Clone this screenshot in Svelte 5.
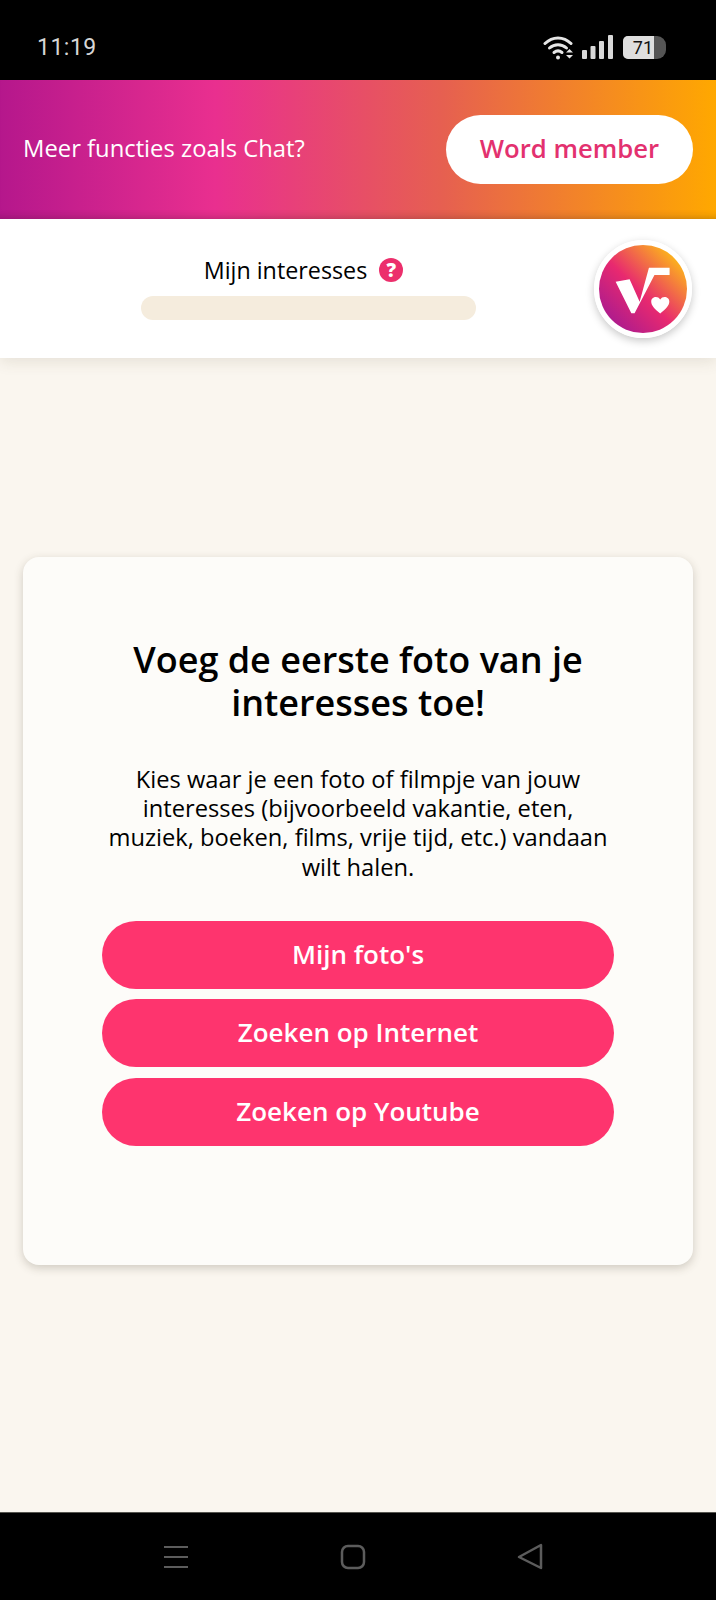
<script>
	const actions = ["Mijn foto's", 'Zoeken op Internet', 'Zoeken op Youtube'];
</script>

<div class="screen">
	<header class="status">
		<span class="time">11:19</span>
		<div class="status-icons">
			<svg class="wifi" width="32" height="26" viewBox="0 0 32 26" fill="none" stroke="#e6e6e6" stroke-linecap="round">
				<path d="M2 9.5C9.5 2 20.5 2 28 9.5" stroke-width="3" />
				<path d="M6.5 14C11.5 9.5 18.500 9.500 23.500 14" stroke-width="3" />
				<path d="M11 18.500C13.500 16.500 16.500 16.500 19 18.500" stroke-width="3" />
				<circle cx="15" cy="23.500" r="2" fill="#e6e6e6" stroke="none" />
				<path d="M23 18.500h7l-3.500-3.500zM23 21h7l-3.500 3.500z" fill="#e6e6e6" stroke="none" />
			</svg>
			<svg class="signal" width="31" height="24" viewBox="0 0 31 24" fill="#d8d8d8">
				<rect x="0" y="15" width="5" height="9" rx="1" />
				<rect x="8.500" y="11" width="5" height="13" rx="1" />
				<rect x="17" y="6" width="5" height="18" rx="1" />
				<rect x="26" y="0" width="5" height="24" rx="1" />
			</svg>
			<div class="battery">
				<div class="battery-fill">71</div>
			</div>
		</div>
	</header>

	<section class="promo">
		<p>Meer functies zoals Chat?</p>
		<button class="member">Word member</button>
	</section>

	<section class="top">
		<div class="interests">
			<div class="label">
				<span>Mijn interesses</span>
				<span class="help">?</span>
			</div>
			<div class="progress"></div>
		</div>
		<div class="avatar">
			<svg width="88" height="88" viewBox="0 0 92 92">
				<defs>
					<linearGradient id="logo-grad" x1="0.15" y1="0.85" x2="0.85" y2="0.15">
						<stop offset="0" stop-color="#b01c8c" />
						<stop offset="0.45" stop-color="#e8296f" />
						<stop offset="1" stop-color="#fbae1f" />
					</linearGradient>
				</defs>
				<circle cx="46" cy="46" r="46" fill="url(#logo-grad)" />
				<path d="M17.400 38.300L32 35.800L42.500 59.200L52.200 23.700H73.800V31.300H58L37.200 71.300H33.800Z" fill="#fff" />
				<path d="M64 71.500C58 67 54.600 63 54.600 59C54.600 54 61.500 52.500 64 57C66.500 52.500 73.500 54 73.500 59C73.500 63 70 67 64 71.500Z" fill="#fff" />
			</svg>
		</div>
	</section>

	<main class="content">
		<div class="card">
			<h1>Voeg de eerste foto van je interesses toe!</h1>
			<p>Kies waar je een foto of filmpje van jouw interesses (bijvoorbeeld vakantie, eten, muziek, boeken, films, vrije tijd, etc.) vandaan wilt halen.</p>
			<div class="actions">
				{#each actions as action}
					<button class="action">{action}</button>
				{/each}
			</div>
		</div>
	</main>

	<nav class="softkeys">
		<svg width="26" height="24" viewBox="0 0 26 24" fill="none" stroke="#5c5c5c" stroke-width="2">
			<path d="M1 2H25M1 12H25M1 22H25" />
		</svg>
		<svg width="26" height="26" viewBox="0 0 26 26" fill="none" stroke="#5c5c5c" stroke-width="2.500">
			<rect x="2" y="2" width="22" height="22" rx="6" />
		</svg>
		<svg width="26" height="28" viewBox="0 0 26 28" fill="none" stroke="#5c5c5c" stroke-width="2.500" stroke-linejoin="round">
			<path d="M24 2V25L2 14Z" />
		</svg>
	</nav>
</div>

<style>
	:global(body) {
		margin: 0;
		background: #faf6ef;
	}
	.screen {
		width: 716px;
		height: 1600px;
		display: flex;
		flex-direction: column;
		font-family: 'Open Sans', 'Liberation Sans', sans-serif;
		color: #000;
		overflow: hidden;
	}

	/* Status bar */
	.status {
		height: 80px;
		flex: none;
		background: #000;
		display: flex;
		align-items: center;
		justify-content: space-between;
		padding: 14px 50px 0 37px;
		box-sizing: border-box;
	}
	.time {
		color: #d6d6d6;
		font-family: Roboto, sans-serif;
		font-size: 23px;
		letter-spacing: 0.5px;
	}
	.status-icons {
		display: flex;
		align-items: center;
		gap: 9px;
	}
	.wifi {
		margin-right: -2px;
	}
	.battery {
		width: 43px;
		height: 23px;
		margin-left: 1px;
		background: #555;
		border-radius: 5px 9px 9px 5px;
		overflow: hidden;
	}
	.battery-fill {
		width: 31px;
		height: 100%;
		background: #dedede;
		color: #111;
		font-family: Roboto, sans-serif;
		font-size: 18px;
		line-height: 23px;
		text-align: right;
		padding-right: 1px;
		box-sizing: border-box;
	}

	/* Promo banner */
	.promo {
		height: 139px;
		flex: none;
		box-sizing: border-box;
		padding: 0 23px;
		display: flex;
		align-items: center;
		justify-content: space-between;
		background: linear-gradient(90deg, #b5178c 0%, #e92f8f 30%, #e66050 62%, #ffa800 100%);
		box-shadow: inset 0 -8px 8px -8px rgba(0, 0, 0, 0.25);
	}
	.promo p {
		margin: 0 0 4px;
		color: #fff;
		font-size: 23.800px;
	}
	.member {
		width: 247px;
		height: 69px;
		padding: 0 0 3px;
		border: 0;
		border-radius: 35px;
		background: #fff;
		color: #e3316f;
		font: 600 25.700px 'Open Sans', sans-serif;
	}

	/* Interests bar */
	.top {
		height: 139px;
		flex: none;
		display: flex;
		align-items: center;
		background: #fff;
		padding: 0 24px 0 141px;
		box-sizing: border-box;
		box-shadow: 0 4px 14px rgba(90, 80, 50, 0.12);
		position: relative;
	}
	.interests {
		width: 335px;
		display: flex;
		flex-direction: column;
		align-items: center;
		margin-top: -2px;
	}
	.label {
		display: flex;
		align-items: center;
		gap: 12px;
		font-size: 23.300px;
		height: 30px;
		margin-right: 10px;
	}
	.help {
		width: 24px;
		height: 24px;
		border-radius: 50%;
		background: #ec2f6c;
		color: #fff;
		font-size: 19px;
		font-weight: 800;
		line-height: 24px;
		text-align: center;
	}
	.progress {
		width: 100%;
		height: 24px;
		margin-top: 11px;
		border-radius: 12px;
		background: #f5ecdd;
	}
	.avatar {
		margin-left: auto;
		width: 88px;
		height: 88px;
		border: 5px solid #fff;
		border-radius: 50%;
		box-shadow: 0 3px 9px rgba(0, 0, 0, 0.22);
	}
	.avatar svg {
		display: block;
	}

	/* Card */
	.content {
		flex: 1;
		padding: 199px 23px 0;
	}
	.card {
		height: 708px;
		box-sizing: border-box;
		padding: 81px 79px 0;
		background: #fdfcf9;
		border-radius: 16px;
		box-shadow: 0 3px 10px rgba(60, 50, 30, 0.22);
		text-align: center;
	}
	h1 {
		margin: 0;
		font-size: 36px;
		font-weight: 600;
		line-height: 43px;
	}
	.card p {
		margin: 41px 0 0;
		font-size: 23.700px;
		line-height: 29.200px;
	}
	.actions {
		margin-top: 39px;
		display: flex;
		flex-direction: column;
		gap: 10.500px;
	}
	.action {
		height: 68px;
		padding: 0 0 2px;
		border: 0;
		border-radius: 34px;
		background: #fe346e;
		color: #fff;
		font: 600 26px 'Open Sans', sans-serif;
	}

	/* Android nav */
	.softkeys {
		height: 88px;
		flex: none;
		background: #000;
		border-top: 1px solid #55554f;
		box-sizing: border-box;
		display: flex;
		align-items: center;
		padding: 0 173px 0 163px;
		justify-content: space-between;
	}
</style>
